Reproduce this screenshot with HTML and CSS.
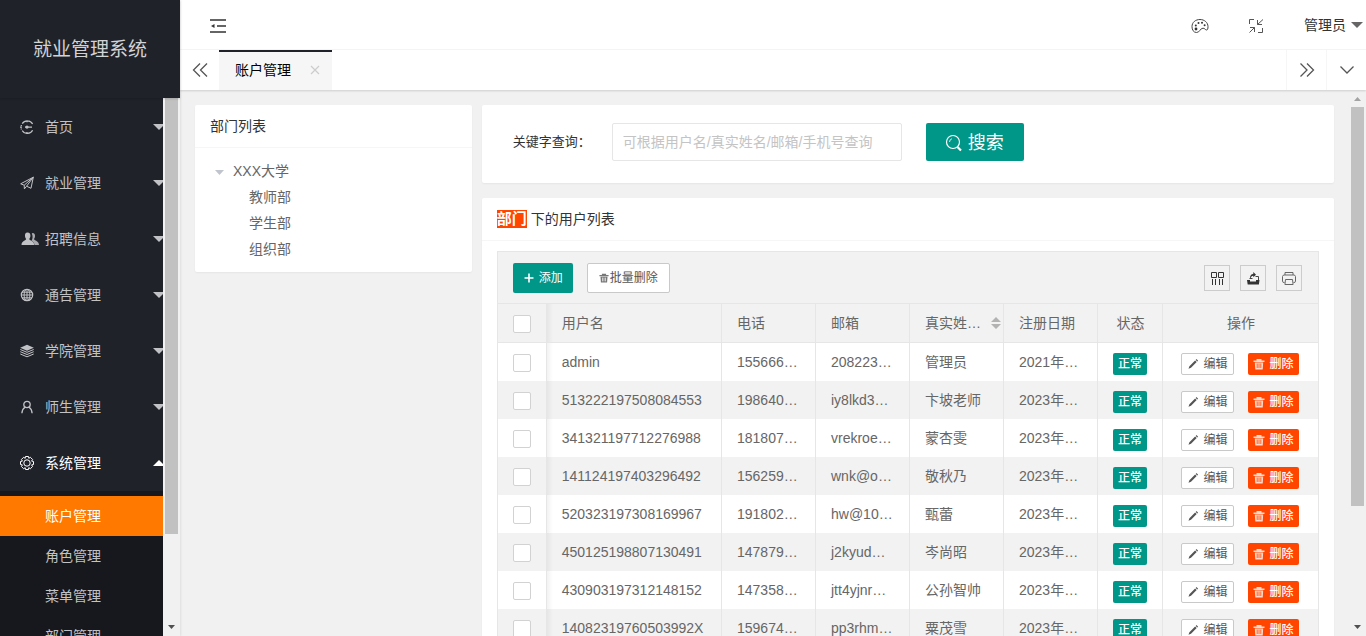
FILE: index.html
```html
<!DOCTYPE html>
<html lang="zh-CN">
<head>
<meta charset="utf-8">
<title>就业管理系统</title>
<link rel="stylesheet" href="styles.css">
</head>
<body>
<svg class="sprite" aria-hidden="true">
  <symbol id="i-trash" viewBox="0 0 12 12"><path d="M.5 2.500h11v1.500H.5zM3.500 1h5v1.500h-5zM1.800 4.500h8.400L9.700 11.500H2.300z" fill="currentColor" opacity=".8"/><path d="M4.200 5.500v4.500M6 5.500v4.500M7.800 5.500v4.500" stroke="var(--slot)" stroke-width=".8"/></symbol>
  <symbol id="i-pen" viewBox="0 0 12 12"><path d="M1.500 10.700l.9-2.500 5.700-5.700 1.600 1.600-5.700 5.700zM8.700 1.900l.8-.8 1.600 1.600-.8.8z" fill="currentColor"/></symbol>
</svg>

<div class="app">
  <aside class="side">
    <div class="logo">就业管理系统</div>
    <div class="side-body">
      <nav class="menu">
        <a class="item" href="#"><svg class="ico" viewBox="0 0 14 14" fill="none" stroke="currentColor" stroke-width="1.200"><path d="M2.200 3.600A6 6 0 0 1 12.600 4M2.200 10.600A6 6 0 0 0 12.600 10.200M1.300 5v1M1.300 8.400v1M0 7.100h2M5 7.100h7M7 .2v2M7 12v2"/><circle cx="7" cy="7.100" r="1" fill="currentColor"/></svg><span>首页</span><svg class="caret" viewBox="0 0 10 6"><path d="M0 0h12L6 6z" fill="currentColor"/></svg></a>
        <a class="item" href="#"><svg class="ico" viewBox="0 0 14 14" fill="none" stroke="currentColor"><path d="M.7 7.800L13.300 1.200 11 12.300 6.600 10.200 4.400 12.900 4.200 9.200zM4.200 9.200L13.300 1.200 6.600 10.200"/></svg><span>就业管理</span><svg class="caret" viewBox="0 0 10 6"><path d="M0 0h12L6 6z" fill="currentColor"/></svg></a>
        <a class="item" href="#"><svg class="ico wide" viewBox="0 0 18 14" fill="currentColor"><path d="M11.500 1c2 0 2.700 1.300 2.500 3.200-.1 1.400-.6 2.100-1 2.700.1 1.500 5 1.800 5 6.100h-4.500c-.2-2.800-2.300-3.600-3-4.300 1.200-1.800 1.600-4.700.3-7.300z" opacity=".85"/><path d="M6.500.5C8.700.5 9.600 2 9.400 4.100 9.300 5.600 8.700 6.400 8.200 7c.2 1.700 5 1.800 5 6H.5c0-4.200 4.500-4.300 4.700-6-.6-.6-1.100-1.400-1.200-2.900C3.800 2 4.500.5 6.500.5z"/></svg><span>招聘信息</span><svg class="caret" viewBox="0 0 10 6"><path d="M0 0h12L6 6z" fill="currentColor"/></svg></a>
        <a class="item" href="#"><svg class="ico" viewBox="0 0 14 14" fill="none" stroke="currentColor"><circle cx="7" cy="7" r="5.700" stroke-width="1.200"/><ellipse cx="7" cy="7" rx="2.900" ry="5.700"/><path d="M7 1v12M1 7h12M2 4.200h10M2 9.800h10"/></svg><span>通告管理</span><svg class="caret" viewBox="0 0 10 6"><path d="M0 0h12L6 6z" fill="currentColor"/></svg></a>
        <a class="item" href="#"><svg class="ico" viewBox="0 0 14 14" fill="none" stroke="currentColor"><path d="M7 .8l6.800 2.900L7 6.700.2 3.700z" fill="currentColor" stroke="none"/><path d="M.3 5.500L7 8.300l6.700-2.800M.3 7.700L7 10.500l6.700-2.800M.3 10L7 12.800l6.700-2.800"/></svg><span>学院管理</span><svg class="caret" viewBox="0 0 10 6"><path d="M0 0h12L6 6z" fill="currentColor"/></svg></a>
        <a class="item" href="#"><svg class="ico" viewBox="0 0 14 14" fill="none" stroke="currentColor" stroke-width="1.300"><circle cx="7" cy="4.500" r="3.200"/><path d="M5.200 7C3 8.500 2 10.500 1.900 13.300M8.800 7c2.200 1.500 3.200 3.500 3.300 6.300"/></svg><span>师生管理</span><svg class="caret" viewBox="0 0 10 6"><path d="M0 0h12L6 6z" fill="currentColor"/></svg></a>
        <a class="item open" href="#"><svg class="ico" viewBox="0 0 14 14" fill="none" stroke="currentColor"><path d="M5.500.5h3l.3 1.800 1.600-1 2.200 2.200-1 1.600 1.900.4v3l-1.900.4 1 1.600-2.200 2.200-1.600-1-.3 1.800h-3l-.3-1.800-1.600 1-2.200-2.200 1-1.600L.5 8.500v-3l1.900-.4-1-1.600 2.200-2.200 1.600 1z"/><circle cx="7" cy="7" r="3.200"/></svg><span>系统管理</span><svg class="caret" viewBox="0 0 10 6"><path d="M0 6h12L6 0z" fill="currentColor"/></svg></a>
        <div class="submenu">
          <a class="active" href="#">账户管理</a>
          <a href="#">角色管理</a>
          <a href="#">菜单管理</a>
          <a href="#">部门管理</a>
        </div>
      </nav>
      <div class="scroll">
        <div class="thumb side-thumb"></div>
        <svg class="sarrow end" viewBox="0 0 17 17"><path d="M5 6h7l-3.500 4z" fill="#505050"/></svg>
      </div>
    </div>
  </aside>

  <div class="main">
    <header class="top">
      <button class="icon-btn" aria-label="收起菜单"><svg width="16" height="14" viewBox="0 0 16 14" fill="none" stroke="#333" stroke-width="1.400"><path d="M0 1h16M7 7h9M0 13h16"/><path d="M1 7l3.500-2v4z" fill="#333" stroke="none"/></svg></button>
      <div class="top-right">
        <button class="icon-btn" aria-label="主题"><svg width="18" height="16" viewBox="0 0 18 16" fill="none" stroke="#444"><path d="M5.500 14.500C2.500 14.500 1 11.800 1 8.700 1 4.200 4.600 1.500 9 1.500s8 3 8 7.200c0 1.900-.4 3.300-1.400 3.300-1.300 0-1.800-1.800-3.600-1.800-3 0-3 4.300-6.500 4.300z"/><g fill="#333" stroke="none"><circle cx="5" cy="11" r="1.400"/><circle cx="4.800" cy="7.500" r="1"/><circle cx="7.500" cy="5" r="1"/><circle cx="11" cy="4.800" r="1"/><circle cx="13.600" cy="7.300" r="1"/></g></svg></button>
        <button class="icon-btn" aria-label="退出全屏"><svg width="16" height="16" viewBox="0 0 16 16" fill="none" stroke="#555"><path d="M1.500 6V1.500H6M15 1.500L9.500 6.500M9.500 2v4.500H14M1.500 14.500l5-5M2 9.500h4.500V14M14.500 10v4.500H10"/></svg></button>
        <a class="user" href="#">管理员<svg width="12" height="6" viewBox="0 0 12 6"><path d="M0 0h12L6 6z" fill="#666"/></svg></a>
      </div>
    </header>

    <div class="tabs">
      <button class="tab-ctl" aria-label="向左"><svg width="16" height="16" viewBox="0 0 16 16" fill="none" stroke="#555" stroke-width="1.300"><path d="M8 1.500L1.500 8 8 14.500M15 1.500L8.500 8l6.500 6.500"/></svg></button>
      <div class="tab"><a href="#">账户管理</a><button class="close" aria-label="关闭"><svg width="10" height="10" viewBox="0 0 10 10" stroke="#ccc" stroke-width="1.200"><path d="M1 1l8 8M9 1L1 9"/></svg></button></div>
      <div class="grow"></div>
      <button class="tab-ctl line" aria-label="向右"><svg width="16" height="16" viewBox="0 0 16 16" fill="none" stroke="#555" stroke-width="1.300"><path d="M8 1.500L14.500 8 8 14.500M1.500 1.500L8 8l-6.500 6.500"/></svg></button>
      <button class="tab-ctl line" aria-label="更多"><svg width="16" height="16" viewBox="0 0 16 16" fill="none" stroke="#555" stroke-width="1.300"><path d="M1.500 4.500L8 11l6.500-6.500"/></svg></button>
    </div>

    <div class="work">
      <div class="page">
        <section class="card">
          <h2 class="card-head">部门列表</h2>
          <ul class="tree">
            <li><svg width="9" height="5" viewBox="0 0 9 5"><path d="M0 0h9L4.500 5z" fill="#c0c4cc"/></svg>XXX大学
              <ul><li>教师部</li><li>学生部</li><li>组织部</li></ul>
            </li>
          </ul>
        </section>

        <div class="right">
          <form class="card search">
            <label for="kw">关键字查询：</label>
            <input id="kw" type="text" placeholder="可根据用户名/真实姓名/邮箱/手机号查询">
            <button type="button" class="go"><svg width="18" height="18" viewBox="0 0 18 18" fill="none" stroke="#fff" stroke-width="1.200"><circle cx="8" cy="8" r="6.500"/><path d="M12.500 13l3.500 3.500" stroke-width="2.200"/><path d="M4.500 8A3.500 3.500 0 0 1 7 4.700" stroke-width=".8"/></svg>搜索</button>
          </form>

          <section class="card">
            <h2 class="card-head"><b class="mark">部门</b> 下的用户列表</h2>
            <div class="list">
              <div class="toolbar">
                <button class="btn add"><svg width="10" height="10" viewBox="0 0 10 10" stroke="#fff" stroke-width="1.600"><path d="M5 .5v9M.5 5h9"/></svg>添加</button>
                <button class="btn batch"><svg width="10" height="10"><use href="#i-trash"/></svg>批量删除</button>
                <div class="grow"></div>
                <button class="tool" aria-label="筛选列"><svg width="16" height="16" viewBox="0 0 16 16" fill="none" stroke="#333"><path d="M2.500 2.500h5v5h-5zM9.500 2.500h5v5h-5zM3.500 9v6M6.500 9v6M10.500 9v6M13.500 9v6"/></svg></button>
                <button class="tool" aria-label="导出"><svg width="16" height="16" viewBox="0 0 16 16" fill="#333"><path d="M2 10h3v1.500h6V10h3.500l-.6 4.500H2.700z"/><path d="M5 8.500C5 5.500 6 4 8.300 4V2L11 4.800 8.300 7.200V5.700C6.700 5.700 6 6.500 5.700 8.500z"/><path d="M4.500 8.500h3M10.500 6.500h3v3.500" fill="none" stroke="#444"/></svg></button>
                <button class="tool" aria-label="打印"><svg width="16" height="16" viewBox="0 0 16 16" fill="none" stroke="#666"><path d="M4 5V2.500h8V5M3.500 12.500H2.200L1.500 11V6.500l1-1.500h11l1 1.500V11l-.7 1.500h-1.300"/><path d="M4.500 9.500h7l.6 5H3.900z"/></svg></button>
              </div>
              <table>
                <colgroup><col class="c-check"><col><col class="c-mid"><col class="c-mid"><col class="c-mid"><col class="c-mid"><col class="c-state"><col class="c-act"></colgroup>
                <thead><tr><th class="ck"><input type="checkbox" aria-label="全选"></th><th>用户名</th><th>电话</th><th>邮箱</th><th><div class="sortable">真实姓…<svg width="10" height="12" viewBox="0 0 10 12"><path d="M0 5h10L5 0zM0 7h10L5 12z" fill="#b2b2b2"/></svg></div></th><th>注册日期</th><th class="mid">状态</th><th class="mid">操作</th></tr></thead>
                <tbody>
                <tr><td class="ck"><input type="checkbox" aria-label="选择"></td><td>admin</td><td>155666…</td><td>208223…</td><td>管理员</td><td>2021年…</td><td class="low"><span class="state">正常</span></td><td class="low"><div class="acts"><button class="sm edit"><svg width="12" height="12"><use href="#i-pen"/></svg>编辑</button><button class="sm del"><svg width="12" height="12"><use href="#i-trash"/></svg>删除</button></div></td></tr>
                <tr><td class="ck"><input type="checkbox" aria-label="选择"></td><td>513222197508084553</td><td>198640…</td><td>iy8lkd3…</td><td>卞坡老师</td><td>2023年…</td><td class="low"><span class="state">正常</span></td><td class="low"><div class="acts"><button class="sm edit"><svg width="12" height="12"><use href="#i-pen"/></svg>编辑</button><button class="sm del"><svg width="12" height="12"><use href="#i-trash"/></svg>删除</button></div></td></tr>
                <tr><td class="ck"><input type="checkbox" aria-label="选择"></td><td>341321197712276988</td><td>181807…</td><td>vrekroe…</td><td>蒙杏雯</td><td>2023年…</td><td class="low"><span class="state">正常</span></td><td class="low"><div class="acts"><button class="sm edit"><svg width="12" height="12"><use href="#i-pen"/></svg>编辑</button><button class="sm del"><svg width="12" height="12"><use href="#i-trash"/></svg>删除</button></div></td></tr>
                <tr><td class="ck"><input type="checkbox" aria-label="选择"></td><td>141124197403296492</td><td>156259…</td><td>wnk@o…</td><td>敬秋乃</td><td>2023年…</td><td class="low"><span class="state">正常</span></td><td class="low"><div class="acts"><button class="sm edit"><svg width="12" height="12"><use href="#i-pen"/></svg>编辑</button><button class="sm del"><svg width="12" height="12"><use href="#i-trash"/></svg>删除</button></div></td></tr>
                <tr><td class="ck"><input type="checkbox" aria-label="选择"></td><td>520323197308169967</td><td>191802…</td><td>hw@10…</td><td>甄蕾</td><td>2023年…</td><td class="low"><span class="state">正常</span></td><td class="low"><div class="acts"><button class="sm edit"><svg width="12" height="12"><use href="#i-pen"/></svg>编辑</button><button class="sm del"><svg width="12" height="12"><use href="#i-trash"/></svg>删除</button></div></td></tr>
                <tr><td class="ck"><input type="checkbox" aria-label="选择"></td><td>450125198807130491</td><td>147879…</td><td>j2kyud…</td><td>岑尚昭</td><td>2023年…</td><td class="low"><span class="state">正常</span></td><td class="low"><div class="acts"><button class="sm edit"><svg width="12" height="12"><use href="#i-pen"/></svg>编辑</button><button class="sm del"><svg width="12" height="12"><use href="#i-trash"/></svg>删除</button></div></td></tr>
                <tr><td class="ck"><input type="checkbox" aria-label="选择"></td><td>430903197312148152</td><td>147358…</td><td>jtt4yjnr…</td><td>公孙智帅</td><td>2023年…</td><td class="low"><span class="state">正常</span></td><td class="low"><div class="acts"><button class="sm edit"><svg width="12" height="12"><use href="#i-pen"/></svg>编辑</button><button class="sm del"><svg width="12" height="12"><use href="#i-trash"/></svg>删除</button></div></td></tr>
                <tr><td class="ck"><input type="checkbox" aria-label="选择"></td><td>14082319760503992X</td><td>159674…</td><td>pp3rhm…</td><td>粟茂雪</td><td>2023年…</td><td class="low"><span class="state">正常</span></td><td class="low"><div class="acts"><button class="sm edit"><svg width="12" height="12"><use href="#i-pen"/></svg>编辑</button><button class="sm del"><svg width="12" height="12"><use href="#i-trash"/></svg>删除</button></div></td></tr>
                </tbody>
              </table>
            </div>
          </section>
        </div>
      </div>
      <div class="scroll">
        <svg class="sarrow" viewBox="0 0 17 17"><path d="M5 11h7L8.500 7z" fill="#a3a3a3"/></svg>
        <div class="thumb page-thumb"></div>
        <svg class="sarrow end" viewBox="0 0 17 17"><path d="M5 6h7l-3.500 4z" fill="#505050"/></svg>
      </div>
    </div>
  </div>
</div>
</body>
</html>
```
FILE: styles.css
```css
* { box-sizing: border-box; }
body {
  margin: 0;
  font: 14px/24px "Liberation Sans", "Noto Sans CJK SC", sans-serif;
  color: #333;
  background: #f1f1f1;
}
a { color: inherit; text-decoration: none; }
button, input { font: inherit; color: inherit; margin: 0; }
button { border: 0; background: none; padding: 0; cursor: pointer; }
ul { list-style: none; margin: 0; padding: 0; }
svg { flex: none; }
.sprite { display: none; }
.grow { flex: 1; }

.app { display: flex; height: 100vh; overflow: hidden; }

/* sidebar */
.side {
  width: 180px;
  flex: none;
  display: flex;
  flex-direction: column;
  background: #20222a;
  color: #c1c2c5;
  box-shadow: 1px 0 2px rgba(0, 0, 0, .08);
  z-index: 2;
}
.logo {
  height: 98px;
  flex: none;
  display: flex;
  align-items: center;
  justify-content: center;
  padding-top: 2px;
  font-size: 19px;
  color: #d2d3d4;
  box-shadow: 0 1px 2px rgba(0, 0, 0, .15);
  z-index: 1;
}
.side-body { flex: 1; min-height: 0; display: flex; overflow: hidden; }
.menu { flex: 1; padding-top: 1px; }
.item { display: flex; align-items: center; height: 56px; padding-left: 20px; }
.item span { flex: 1; }
.ico { width: 14px; height: 14px; margin-right: 11px; }
.ico.wide { width: 18px; margin: 0 6px 0 1px; }
.caret { width: 10px; height: 6px; }
.open { color: #fff; }
.submenu { background: #16181d; padding: 5px 0; }
.submenu a { display: block; line-height: 40px; padding-left: 45px; }
.submenu .active { background: #ff7800; color: #fff; }

/* scroll rails */
.scroll {
  width: 17px;
  flex: none;
  display: flex;
  flex-direction: column;
  background: #f1f1f1;
}
.thumb { background: #c1c1c1; margin: 0 2px; }
.side-thumb { height: 81%; }
.page-thumb { height: 73%; }
.sarrow { width: 17px; height: 17px; }
.end { margin-top: auto; }

/* header and tabs */
.main { flex: 1; min-width: 0; display: flex; flex-direction: column; }
.top {
  height: 50px;
  flex: none;
  display: flex;
  align-items: center;
  justify-content: space-between;
  padding: 0 3px 0 30px;
  background: #fff;
  border-bottom: 1px solid #f6f6f6;
}
.icon-btn { display: flex; padding-top: 2px; }
.top-right { display: flex; align-items: center; gap: 39px; }
.user { display: flex; align-items: center; gap: 5px; padding-left: 1px; }
.tabs {
  height: 40px;
  flex: none;
  display: flex;
  background: #fff;
  box-shadow: 0 1px 2px rgba(0, 0, 0, .15);
  z-index: 1;
}
.tab-ctl { width: 39px; display: flex; align-items: center; justify-content: center; }
.line { width: 40px; border-left: 1px solid #f6f6f6; }
.tab {
  display: flex;
  align-items: center;
  padding: 0 12px 2px 16px;
  background: #f6f6f6;
  border-top: 2px solid #20222a;
  color: #000;
  gap: 19px;
}
.close { display: flex; }

/* content */
.work { flex: 1; min-height: 0; display: flex; overflow: hidden; }
.page {
  flex: 1;
  display: grid;
  grid-template-columns: calc(25% - 8px) 1fr;
  gap: 10px;
  align-items: start;
  padding: 15px;
}
.right { display: grid; gap: 15px; min-width: 0; }
.card { background: #fff; border-radius: 2px; box-shadow: 0 1px 2px rgba(0, 0, 0, .05); }
.card-head {
  margin: 0;
  font-size: 14px;
  font-weight: 400;
  line-height: 42px;
  padding: 0 15px;
  border-bottom: 1px solid #f6f6f6;
}
.mark { background: #ff4500; color: #fff; font-size: 15px; line-height: 18px; display: inline-block; }
.tree { padding: 10px 20px; line-height: 26px; color: #666; }
.tree svg { margin-right: 9px; vertical-align: middle; }
.tree ul { padding-left: 34px; }

.search { display: flex; align-items: center; height: 78px; padding: 0 31px 5px; }
.search label { font-size: 13px; width: 99px; }
.search input {
  width: 290px;
  height: 38px;
  padding: 0 10px;
  border: 1px solid #e6e6e6;
  border-radius: 2px;
  outline: 0;
}
.search input::placeholder { color: #c4c4c4; }
.go {
  display: flex;
  align-items: center;
  gap: 5px;
  height: 38px;
  margin-left: 24px;
  padding: 2px 20px 0 19px;
  border-radius: 2px;
  background: #009688;
  color: #fff;
  font-size: 18px;
}

/* user list */
.list { margin: 10px 15px; border: 1px solid #e6e6e6; }
.toolbar {
  display: flex;
  align-items: center;
  height: 52px;
  padding: 0 16px 0 15px;
  background: #f2f2f2;
  border-bottom: 1px solid #e6e6e6;
}
.btn {
  display: flex;
  align-items: center;
  height: 30px;
  border-radius: 2px;
  font-size: 12px;
}
.add { background: #009688; color: #fff; gap: 5px; padding: 0 10px 0 11px; margin-right: 14px; }
.batch { background: #fff; border: 1px solid #c9c9c9; color: #555; gap: 1px; padding: 0 11px; --slot: #fff; }
.tool {
  display: flex;
  align-items: center;
  justify-content: center;
  width: 26px;
  height: 26px;
  border: 1px solid #ccc;
  margin-left: 10px;
}
table {
  width: 100%;
  table-layout: fixed;
  border-collapse: separate;
  border-spacing: 0;
  color: #666;
}
.c-check { width: 49px; }
.c-mid { width: 94px; }
.c-state { width: 65px; }
.c-act { width: 155px; }
th, td {
  height: 38px;
  padding: 0 14px 0 15px;
  border-right: 1px solid #e6e6e6;
  text-align: left;
  font-weight: 400;
  white-space: nowrap;
}
th:last-child, td:last-child { border-right: 0; }
th { height: 39px; border-bottom: 1px solid #e6e6e6; background: #f2f2f2; }
tbody tr:nth-child(even) { background: #f2f2f2; }
.ck { padding: 2px 15px 0; }
.ck + * { background-image: linear-gradient(to right, rgba(0, 0, 0, .05), transparent 6px); }
.ck input {
  appearance: none;
  display: block;
  width: 18px;
  height: 18px;
  border: 1px solid #d2d2d2;
  border-radius: 2px;
  background: #fff;
}
.mid { text-align: center; }
.low { padding-top: 4px; }
.sortable { display: flex; align-items: center; justify-content: space-between; margin-right: -12px; }
.state, .sm {
  display: flex;
  align-items: center;
  justify-content: center;
  height: 22px;
  border-radius: 2px;
  font-size: 12px;
  line-height: 20px;
}
.state { width: 34px; background: #009688; color: #fff; font-weight: 500; }
.acts { display: flex; gap: 14px; padding-left: 3px; }
.sm { gap: 4px; }
.edit { width: 53px; border: 1px solid #c9c9c9; background: #fff; color: #555; }
.del { width: 51px; background: #ff4500; color: #fff; font-weight: 500; --slot: #ff4500; }
```
